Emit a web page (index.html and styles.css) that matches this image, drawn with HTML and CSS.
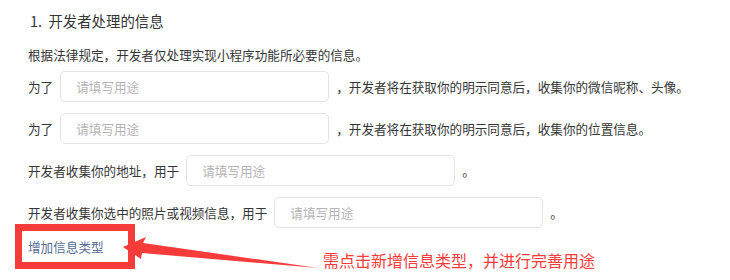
FILE: index.html
```html
<!DOCTYPE html>
<html lang="zh-CN">
<head>
<meta charset="utf-8">
<title>开发者处理的信息</title>
<link rel="stylesheet" href="styles.css">
</head>
<body>
<div class="page">
  <div class="title">1.&nbsp;&nbsp;开发者处理的信息</div>
  <p class="desc">根据法律规定，开发者仅处理实现小程序功能所必要的信息。</p>
  <div class="rows">
    <div class="row"><span>为了</span><input class="field w-a" placeholder="请填写用途"><span>，开发者将在获取你的明示同意后，收集你的微信昵称、头像。</span></div>
    <div class="row"><span>为了</span><input class="field w-a" placeholder="请填写用途"><span>，开发者将在获取你的明示同意后，收集你的位置信息。</span></div>
    <div class="row"><span>开发者收集你的地址，用于</span><input class="field w-a" placeholder="请填写用途"><span>。</span></div>
    <div class="row"><span>开发者收集你选中的照片或视频信息，用于</span><input class="field w-a" placeholder="请填写用途"><span>。</span></div>
  </div>
  <div class="add-line"><a class="add-link" href="#">增加信息类型</a></div>

  <div class="mark-box"></div>
  <svg class="arrow" width="200" height="40" viewBox="0 0 200 40" aria-hidden="true">
    <polygon points="0,18 23,8 20,14 195,39 19,24 18,30" fill="#f63b3b"/>
  </svg>
  <div class="note">需点击新增信息类型，并进行完善用途</div>
</div>
</body>
</html>
```
FILE: styles.css
```css
html, body {
  margin: 0;
  padding: 0;
  background: #ffffff;
}
body {
  font-family: "Noto Sans CJK SC", "Microsoft YaHei", sans-serif;
  color: #353535;
}
.page {
  position: relative;
  width: 730px;
  height: 280px;
  padding: 11px 0 0 28px;
  box-sizing: border-box;
}
.title {
  font-size: 14.4px;
  line-height: 20px;
  height: 20px;
  padding-left: 2px;
}
.desc {
  margin: 14px 0 0 0;
  font-size: 12.6px;
  line-height: 20px;
}
.rows {
  display: flex;
  flex-direction: column;
  gap: 11px;
  margin-top: 6px;
}
.row {
  display: flex;
  align-items: center;
  gap: 7px;
  height: 31px;
  font-size: 12.6px;
  white-space: nowrap;
}
.field {
  box-sizing: border-box;
  width: 269px;
  height: 31px;
  border: 1px solid #e3e3e3;
  border-radius: 5px;
  padding: 0 0 0 15px;
  font-family: inherit;
  font-size: 12.6px;
  color: #353535;
  background: #fff;
  outline: none;
}
.field::placeholder {
  color: #b4b4b4;
}
.add-line {
  margin-top: 9px;
  line-height: 20px;
  font-size: 12.6px;
}
.add-link {
  color: #576b95;
  text-decoration: none;
}
.mark-box {
  position: absolute;
  left: 15px;
  top: 224px;
  width: 120px;
  height: 45px;
  box-sizing: border-box;
  border: 7px solid #f63b3b;
}
.arrow {
  position: absolute;
  left: 123px;
  top: 229px;
}
.note {
  position: absolute;
  left: 323px;
  top: 249px;
  font-size: 16px;
  line-height: 22px;
  color: #f63b3b;
  white-space: nowrap;
}
```
